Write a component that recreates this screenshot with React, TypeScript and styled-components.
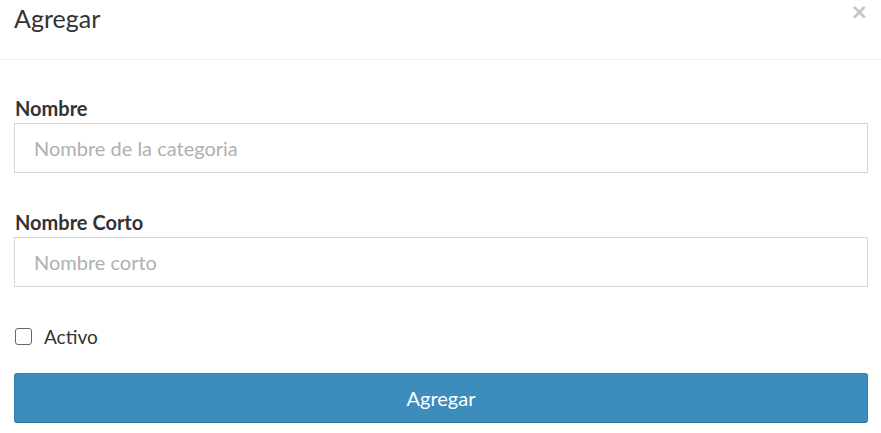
import React from "react";
import styled, { createGlobalStyle } from "styled-components";

const Global = createGlobalStyle`
  body {
    margin: 0;
    background: #fff;
    font-family: "Lato", "Open Sans", sans-serif;
    color: #333;
  }
  * { box-sizing: border-box; }
`;

const Modal = styled.div`
  width: 881px;
  height: 433px;
  background: #fff;
`;

const Header = styled.div`
  position: relative;
  height: 60px;
  padding: 0 14px;
  display: flex;
  align-items: flex-start;
  border-bottom: 1px solid #f0f0f0;
`;

const Title = styled.h4`
  margin: 2px 0 0;
  font-size: 25px;
  font-weight: 400;
  line-height: 32px;
  color: #333;
`;

const Close = styled.button`
  position: absolute;
  top: 2px;
  right: 13px;
  border: 0;
  background: none;
  padding: 0;
  font-size: 21px;
  line-height: 20px;
  font-weight: 700;
  color: #c4c4c4;
  font-family: "DejaVu Sans", sans-serif;
`;

const Body = styled.div`
  padding: 36px 13px 0 14px;
  display: flex;
  flex-direction: column;
`;

const Group = styled.div`
  display: flex;
  flex-direction: column;
  margin-bottom: 37px;
`;

const Label = styled.label`
  font-size: 20px;
  font-weight: 700;
  line-height: 24px;
  margin: 0 0 3px 1px;
  color: #333;
`;

const Input = styled.input`
  height: 50px;
  width: 100%;
  border: 1px solid #d2d6de;
  padding: 0 19px;
  font-size: 20px;
  font-family: "Lato", "Open Sans", sans-serif;
  color: #555;
  outline: none;
  &::placeholder {
    color: #b0b0b0;
  }
`;

const CheckRow = styled.label`
  display: flex;
  align-items: center;
  gap: 12px;
  font-size: 19px;
  color: #333;
  margin: 0 0 25px 1px;
  height: 24px;
`;

const Box = styled.input`
  appearance: none;
  width: 17px;
  height: 17px;
  margin: 0;
  border: 1.5px solid #666;
  border-radius: 3px;
  background: #fff;
`;

const Submit = styled.button`
  height: 50px;
  width: 100%;
  background: #3c8dbc;
  border: 1px solid #367fa9;
  border-bottom-color: #2f6e93;
  border-radius: 3px;
  color: #fff;
  font-size: 20px;
  font-family: "Lato", "Open Sans", sans-serif;
`;

export default function App() {
  return (
    <>
      <Global />
      <Modal>
        <Header>
          <Title>Agregar</Title>
          <Close>×</Close>
        </Header>
        <Body>
          <Group>
            <Label>Nombre</Label>
            <Input placeholder="Nombre de la categoria" />
          </Group>
          <Group>
            <Label>Nombre Corto</Label>
            <Input placeholder="Nombre corto" />
          </Group>
          <CheckRow>
            <Box type="checkbox" />
            Activo
          </CheckRow>
          <Submit>Agregar</Submit>
        </Body>
      </Modal>
    </>
  );
}
